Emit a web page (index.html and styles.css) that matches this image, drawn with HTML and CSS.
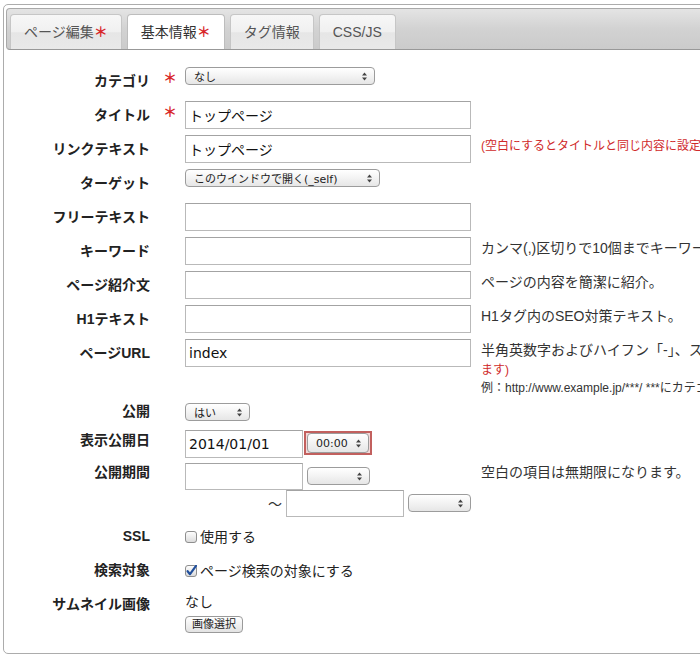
FILE: index.html
```html
<!DOCTYPE html>
<html lang="ja">
<head>
<meta charset="utf-8">
<title>基本情報</title>
<link rel="stylesheet" href="styles.css">
</head>
<body>
<div class="panel">
  <div class="tabbar">
    <div class="tab">ページ編集<span class="req">＊</span></div>
    <div class="tab active">基本情報<span class="req">＊</span></div>
    <div class="tab">タグ情報</div>
    <div class="tab">CSS/JS</div>
  </div>
  <div class="form">
    <div class="row">
      <div class="label">カテゴリ</div>
      <div class="mark">＊</div>
      <div class="field"><div class="select w-cat"><span>なし</span><svg class="arr" width="5" height="9" viewBox="0 0 5 9"><path d="M0 3.6 L2.5 0.6 L5 3.6Z M0 5.4 L2.5 8.4 L5 5.4Z" fill="#444"/></svg></div></div>
    </div>
    <div class="row">
      <div class="label">タイトル</div>
      <div class="mark">＊</div>
      <div class="field"><input class="input" type="text" value="トップページ"></div>
    </div>
    <div class="row">
      <div class="label">リンクテキスト</div>
      <div class="mark"></div>
      <div class="field"><input class="input" type="text" value="トップページ"></div>
      <div class="help red">(空白にするとタイトルと同じ内容に設定されます)</div>
    </div>
    <div class="row">
      <div class="label">ターゲット</div>
      <div class="mark"></div>
      <div class="field"><div class="select w-target"><span>このウインドウで開く(_self)</span><svg class="arr" width="5" height="9" viewBox="0 0 5 9"><path d="M0 3.6 L2.5 0.6 L5 3.6Z M0 5.4 L2.5 8.4 L5 5.4Z" fill="#444"/></svg></div></div>
    </div>
    <div class="row">
      <div class="label">フリーテキスト</div>
      <div class="mark"></div>
      <div class="field"><input class="input" type="text" value=""></div>
    </div>
    <div class="row">
      <div class="label">キーワード</div>
      <div class="mark"></div>
      <div class="field"><input class="input" type="text" value=""></div>
      <div class="help">カンマ(,)区切りで10個までキーワードを設定できます。</div>
    </div>
    <div class="row">
      <div class="label">ページ紹介文</div>
      <div class="mark"></div>
      <div class="field"><input class="input" type="text" value=""></div>
      <div class="help">ページの内容を簡潔に紹介。</div>
    </div>
    <div class="row">
      <div class="label">H1テキスト</div>
      <div class="mark"></div>
      <div class="field"><input class="input" type="text" value=""></div>
      <div class="help">H1タグ内のSEO対策テキスト。</div>
    </div>
    <div class="row">
      <div class="label">ページURL</div>
      <div class="mark"></div>
      <div class="field"><input class="input" type="text" value="index"></div>
      <div class="help">
        <div class="hl">半角英数字およびハイフン「-」、スラッシュ「/」が使用できます。<span class="red">(空白の場合はページIDが自動で設定され</span></div>
        <div class="hl red">ます)</div>
        <div class="hl small">例：http://www.example.jp/***/ ***にカテゴリのURLが入ります。</div>
      </div>
    </div>
    <div class="row row-pub">
      <div class="label">公開</div>
      <div class="mark"></div>
      <div class="field"><div class="select w-pub"><span>はい</span><svg class="arr" width="5" height="9" viewBox="0 0 5 9"><path d="M0 3.6 L2.5 0.6 L5 3.6Z M0 5.4 L2.5 8.4 L5 5.4Z" fill="#444"/></svg></div></div>
    </div>
    <div class="row row-date">
      <div class="label">表示公開日</div>
      <div class="mark"></div>
      <div class="field line">
        <input class="input date" type="text" value="2014/01/01">
        <div class="focus"><div class="select w-time"><span>00:00</span><svg class="arr" width="5" height="9" viewBox="0 0 5 9"><path d="M0 3.6 L2.5 0.6 L5 3.6Z M0 5.4 L2.5 8.4 L5 5.4Z" fill="#444"/></svg></div></div>
      </div>
    </div>
    <div class="row row-period">
      <div class="label">公開期間</div>
      <div class="mark"></div>
      <div class="field">
        <div class="line">
          <input class="input date short" type="text" value="">
          <div class="select w-time2"><span></span><svg class="arr" width="5" height="9" viewBox="0 0 5 9"><path d="M0 3.6 L2.5 0.6 L5 3.6Z M0 5.4 L2.5 8.4 L5 5.4Z" fill="#444"/></svg></div>
        </div>
        <div class="line end">
          <span class="tilde">～</span>
          <input class="input date short" type="text" value="">
          <div class="select w-time2"><span></span><svg class="arr" width="5" height="9" viewBox="0 0 5 9"><path d="M0 3.6 L2.5 0.6 L5 3.6Z M0 5.4 L2.5 8.4 L5 5.4Z" fill="#444"/></svg></div>
        </div>
      </div>
      <div class="help">空白の項目は無期限になります。</div>
    </div>
    <div class="row row-ssl">
      <div class="label">SSL</div>
      <div class="mark"></div>
      <div class="field check">
        <svg class="cb" width="12" height="12" viewBox="0 0 12 12"><defs><linearGradient id="cg1" x1="0" y1="0" x2="0" y2="1"><stop offset="0" stop-color="#ffffff"/><stop offset="1" stop-color="#dadada"/></linearGradient></defs><rect x="0.5" y="0.5" width="11" height="11" rx="2.5" fill="url(#cg1)" stroke="#8e8e8e"/></svg>
        <span>使用する</span>
      </div>
    </div>
    <div class="row row-search">
      <div class="label">検索対象</div>
      <div class="mark"></div>
      <div class="field check">
        <svg class="cb" width="12" height="12" viewBox="0 0 12 12"><defs><linearGradient id="cg2" x1="0" y1="0" x2="0" y2="1"><stop offset="0" stop-color="#ffffff"/><stop offset="1" stop-color="#dadada"/></linearGradient></defs><rect x="0.5" y="0.5" width="11" height="11" rx="2.5" fill="url(#cg2)" stroke="#8e8e8e"/><path d="M2.6 6.2 L5 9.2 L11 0.8" stroke="#22509c" stroke-width="2.2" fill="none" stroke-linecap="round" stroke-linejoin="round"/></svg>
        <span>ページ検索の対象にする</span>
      </div>
    </div>
    <div class="row">
      <div class="label">サムネイル画像</div>
      <div class="mark"></div>
      <div class="field thumb">
        <div class="none">なし</div>
        <div class="btn">画像選択</div>
      </div>
    </div>
  </div>
</div>
</body>
</html>
```
FILE: styles.css
```css
html, body {
  margin: 0;
  padding: 0;
  overflow: hidden;
  background: #fff;
}
body {
  width: 700px;
  height: 657px;
  font-family: "Liberation Sans", "Noto Sans CJK JP", sans-serif;
  font-size: 14px;
  color: #222;
}
.panel {
  margin: 4px 0 0 3px;
  width: 1000px;
  border: 1px solid #acacac;
  border-radius: 5px;
  padding: 3px 2px 20px;
}
.tabbar {
  display: flex;
  gap: 5px;
  height: 35px;
  padding: 5px 0 0 3px;
  border: 1px solid #a9a9a9;
  border-bottom-color: #989898;
  border-radius: 4px;
  background: linear-gradient(#e4e4e4, #d2d2d2 50%, #cbcbcb);
}
.tab {
  box-sizing: border-box;
  height: 35px;
  padding: 0 13px;
  border: 1px solid #c6c6c6;
  border-bottom: none;
  border-radius: 4px 4px 0 0;
  background: linear-gradient(#f7f7f7, #f0f0f0 50%, #e6e6e6 52%, #e9e9e9);
  color: #555;
  line-height: 34px;
  white-space: nowrap;
}
.tab.active {
  background: #fff;
  color: #333;
  border-color: #bdbdbd;
}
.req {
  color: #d8262a;
  font-weight: bold;
}

.form { padding-top: 17px; }
.row {
  display: grid;
  grid-template-columns: 144px 35px 286px max-content;
  align-items: start;
  margin-bottom: 6px;
}
.row:last-child { margin-bottom: 0; }
.label {
  text-align: right;
  font-weight: bold;
  line-height: 28px;
  color: #222;
  white-space: nowrap;
}
.mark {
  color: #d8262a;
  font-weight: bold;
  padding-left: 13px;
  line-height: 22px;
}
.field { min-height: 28px; }
.help {
  margin-left: 10px;
  padding-top: 1px;
  line-height: 20px;
  white-space: nowrap;
  color: #333;
}
.help .hl { height: 20px; }
.help .hl.small {
  height: 16px;
  font-size: 12px;
  line-height: 16px;
}
.help.red, .help .red {
  color: #d02a2a;
  font-size: 12px;
}
.input {
  display: block;
  box-sizing: border-box;
  width: 286px;
  height: 28px;
  margin: 0;
  padding: 0 3px;
  border: 1px solid #b9b9b9;
  border-top-color: #a3a3a3;
  border-radius: 0;
  font-family: "DejaVu Sans", "Noto Sans CJK JP", sans-serif;
  font-size: 14px;
  color: #111;
  background: #fff;
  outline: none;
}
.select {
  box-sizing: border-box;
  display: flex;
  align-items: center;
  justify-content: space-between;
  height: 18px;
  padding: 0 7px 0 8px;
  border: 1px solid #9c9c9c;
  border-radius: 4px;
  background: linear-gradient(#ffffff, #f3f3f3 50%, #e6e6e6);
  font-family: "DejaVu Sans", "Noto Sans CJK JP", sans-serif;
  font-size: 11px;
  color: #222;
  white-space: nowrap;
}
.select .arr { flex: none; }
.w-cat { width: 190px; }
.w-target { width: 195px; }
.w-pub { width: 65px; margin-top: 1px; }
.w-time { width: 62px; height: 20px; }
.w-time2 { width: 63px; margin-top: 4px; }

.row-pub .label { line-height: 18px; }
.row-pub .field { min-height: 22px; }
.row-date { margin-bottom: 5px; }
.row-date .label { line-height: 20px; }
.row-period { margin-bottom: 5px; }
.row-period .label { line-height: 18px; }
.row-period .help { line-height: 18px; padding-top: 0; }
.row-ssl { margin-bottom: 6px; }
.row-search { margin-bottom: 6px; }

.line {
  display: flex;
  align-items: flex-start;
  gap: 4px;
}
.line.end { justify-content: flex-end; }
.date { width: 118px; }
.date.short { height: 27px; }
.row-date .line { gap: 1px; }
.focus {
  margin-top: 1px;
  padding: 0 1px;
  border: 2px solid #c2605e;
  background: #f3d9d9;
}
.tilde {
  font-family: "Noto Sans CJK JP", sans-serif;
  line-height: 27px;
  height: 27px;
  color: #333;
}
.check {
  display: flex;
  align-items: center;
  height: 28px;
  color: #222;
}
.check .cb { margin-right: 3px; margin-top: 1px; }
.thumb .none { line-height: 24px; height: 24px; }
.btn {
  display: inline-block;
  vertical-align: top;
  box-sizing: border-box;
  height: 17px;
  margin-top: 2px;
  padding: 0 6px;
  border: 1px solid #9a9a9a;
  border-radius: 4px;
  background: linear-gradient(#ffffff, #f1f1f1 50%, #e3e3e3);
  font-size: 11px;
  line-height: 15px;
  color: #222;
}
```
